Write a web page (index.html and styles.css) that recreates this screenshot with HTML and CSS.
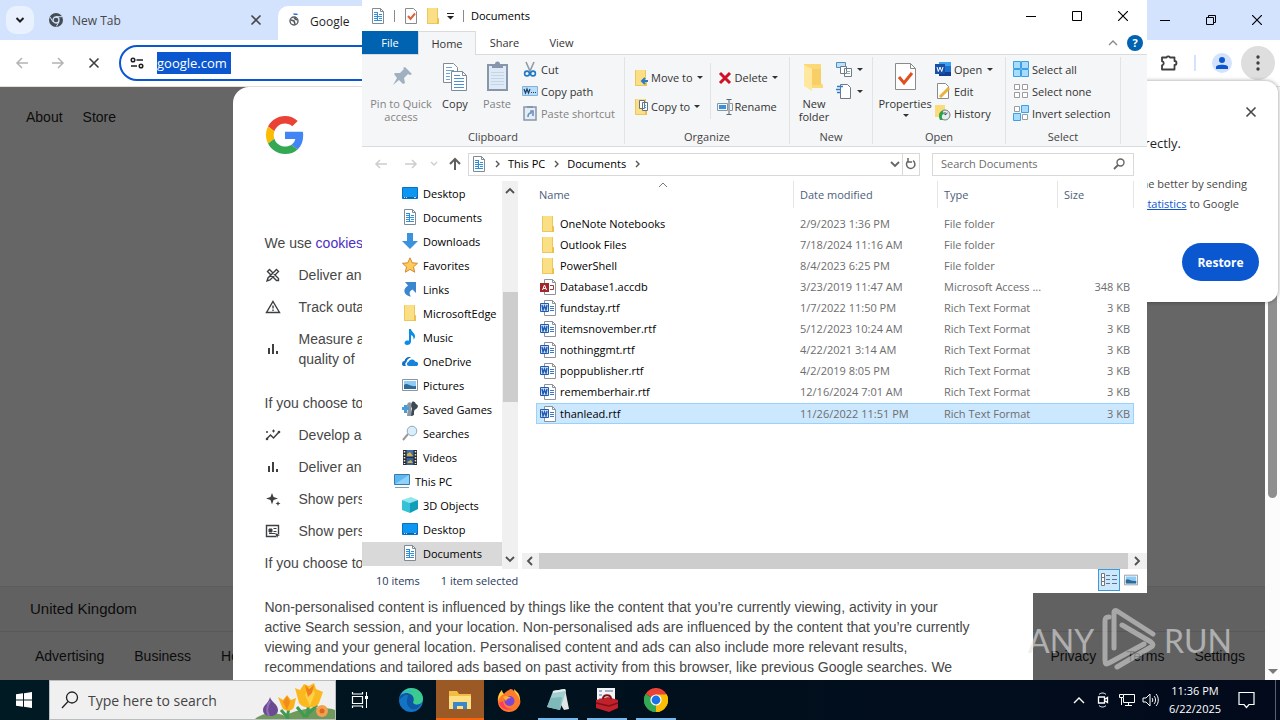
FILE: index.html
```html
<!DOCTYPE html>
<html lang="en">
<head>
  <meta charset="UTF-8" />
  <title>Documents</title>
  <link rel="stylesheet" href="styles.css">
</head>
<body>

  <!-- shared icons -->
  <svg class="sprite" aria-hidden="true">
    <symbol id="i-doc" viewBox="0 0 16 16">
      <path d="M2.500 .5h8l3 3v12h-11z" fill="#fff" stroke="#7f8b94"/>
      <path d="M10.500 .5v3h3" fill="none" stroke="#7f8b94"/>
      <path d="M4 4.500h4M4 6.500h3M9 6.500h3M4 8.500h8M4 10.500h3M9 10.500h3M4 12.500h8" stroke="#2f8fd8"/>
      <path d="M7.500 4v9" stroke="#2f8fd8"/>
    </symbol>
    <symbol id="i-folder" viewBox="0 0 16 16">
      <path d="M2 0h11v10h1v6H2z" fill="#fbdf85"/>
      <path d="M2.500 0v15.500h11V10.500h-1V0" fill="none" stroke="#ecc65f"/>
      <path d="M12 10l2 1v5h-2z" fill="#edc04b"/>
    </symbol>
    <symbol id="i-check" viewBox="0 0 16 16">
      <path d="M2.500 .5h8l3 3v12h-11z" fill="#fff" stroke="#8a8a8a"/>
      <path d="M5 8l2.500 3L12 5.500" fill="none" stroke="#e0603a" stroke-width="2"/>
    </symbol>
    <symbol id="i-word" viewBox="0 0 16 16">
      <path d="M4.500 .5h8l3 3v12h-11z" fill="#fff" stroke="#8c9299"/>
      <path d="M12.500 .5v3h3" fill="none" stroke="#8c9299"/>
      <path d="M10 6.500h4M10 8.500h4M10 10.500h4" stroke="#3b78c9"/>
      <path d="M.5 3.500h8v8h-8z" fill="#cfe0f5" stroke="#1f5bb5"/>
      <path d="M2 5l1 5 1.500-4L6 10l1-5" fill="none" stroke="#1f5bb5" stroke-width="1.400"/>
    </symbol>
    <symbol id="i-access" viewBox="0 0 16 16">
      <path d="M4.500 .5h8l3 3v12h-11z" fill="#fff" stroke="#8c9299"/>
      <path d="M12.500 .5v3h3" fill="none" stroke="#8c9299"/>
      <path d="M10 6.500h3.500v4H10" fill="none" stroke="#a4373a"/>
      <path d="M0 4h9v9H0z" fill="#a4262c"/>
      <path d="M2.500 11l2-5 2 5M3.200 9.500h2.600" fill="none" stroke="#fff"/>
    </symbol>
    <symbol id="i-desktop" viewBox="0 0 16 16">
      <path d="M.5 2.500h15v11H.5z" fill="#0d97f2" stroke="#0b6fc0"/>
      <path d="M1 12.500h14" stroke="#0a63ae"/>
      <path d="M2 12.500h1M4 12.500h1M12 12.500h2" stroke="#bfe2fb"/>
    </symbol>
    <symbol id="i-down" viewBox="0 0 16 16"><path d="M5 0h6v8h5l-8 8-8-8h5z" fill="#3a93dc"/></symbol>
    <symbol id="i-star" viewBox="0 0 16 16"><path d="M8 .8l2.200 5 5.300.5-4 3.600 1.200 5.300L8 12.400l-4.700 2.800 1.200-5.300-4-3.600 5.300-.5z" fill="#fccb5b" stroke="#d58a30"/></symbol>
    <symbol id="i-link" viewBox="0 0 16 16"><path d="M3 1h11v11l-3.500-3.500C7 10 7 13 9 15.500 4 15 1 11 3 7.500 4 6 5 5.500 6 4.500z" fill="#3a86d0"/></symbol>
    <symbol id="i-music" viewBox="0 0 16 16"><path d="M7 0h2c.3 3 4.500 4 4 8-.2 1-1 2-1.500 2.500C12 7.500 10 6.500 9 6v6.500C9 15 7 16 5 16c-3 0-3.500-4 0-4.500.8-.1 1.500 0 2 .2z" fill="#0c8ce9"/></symbol>
    <symbol id="i-cloud" viewBox="0 0 16 16">
      <path d="M0 11c0-2 1-3 2.500-3C3 5 6 3 9 4.500 6 5 5 7 4.500 9 3 9.500 3 12 4 13H2c-1.300 0-2-1-2-2z" fill="#0f6fc5"/>
      <path d="M5 11c0-1.500.8-2 1.500-2 .5-3 5.500-3.500 6.500-.5 4 0 4 4.500 1 4.500H7c-1.300 0-2-1-2-2z" fill="#1683dc"/>
    </symbol>
    <symbol id="i-picture" viewBox="0 0 16 16">
      <path d="M.5 2.500h15v11H.5z" fill="#fff" stroke="#8a959e"/>
      <path d="M2 4h12v8H2z" fill="#8ecbf5"/>
      <path d="M2 8c3-3 5 2 12 1v3H2z" fill="#2d6a98"/>
    </symbol>
    <symbol id="i-games" viewBox="0 0 16 16">
      <path d="M5 4c1-4 5-3 5 0 0 2-1 2-1 3l2 8H5l1-8C5 6 5 5 5 4z" fill="#8b969e"/>
      <path d="M10 1c2-1 3 0 4 2 3 1 2 4 0 5-2 1-2 2-2 6l-3 1 1-7c-1-2-1-5 0-7z" fill="#3c4852"/>
      <path d="M0 6h2V4h3v2h2v3H5v3H2V9H0z" fill="#4a9bd6"/>
    </symbol>
    <symbol id="i-magnify" viewBox="0 0 16 16">
      <path d="M1 15l5-6" stroke="#9a9a9a" stroke-width="2"/>
      <circle cx="10" cy="6" r="4.800" fill="#d9eefb" stroke="#8fa9bd"/>
    </symbol>
    <symbol id="i-video" viewBox="0 0 16 16">
      <path d="M1 1h14v15H1z" fill="#2b2b2b"/>
      <path d="M4.500 1h7v7h-7z" fill="#3f6fb0"/><path d="M4.500 9h7v7h-7z" fill="#345f9c"/>
      <path d="M5 5l3-2 3 4H5zM5 13l4-2 2 3H6z" fill="#d4b13e"/>
      <path d="M2.500 2v13M13.500 2v13" stroke="#e8e8e8" stroke-width="1.500" stroke-dasharray="1.500 1.500"/>
    </symbol>
    <symbol id="i-pc" viewBox="0 0 16 16">
      <path d="M.5 1.500h15v10H.5z" fill="#5cb8f2" stroke="#3c7ba8"/>
      <path d="M1 11L15 2v9z" fill="#8fd3fa"/>
      <path d="M1 14.500h14" stroke="#7aa0b8"/>
    </symbol>
    <symbol id="i-cube" viewBox="0 0 16 16">
      <path d="M0 3l9-3 7 3-8 3z" fill="#8ee6ef"/><path d="M0 3l8 3v10l-8-3z" fill="#35c1d6"/><path d="M16 3L8 6v10l8-4z" fill="#0f9db8"/>
    </symbol>
    <symbol id="i-bars" viewBox="0 0 16 16"><path d="M4 7v6M8 3v10M12 10v3" stroke="#3c4043" stroke-width="2"/></symbol>
    <symbol id="i-x" viewBox="0 0 16 16"><path d="M3.500 3.500l9 9M12.500 3.500l-9 9" stroke="currentColor" stroke-width="1.600"/></symbol>
    <symbol id="i-chrome" viewBox="0 0 24 24">
      <path d="M12 12L1.600 6A12 12 0 0 1 22.400 6z" fill="#ea4335"/>
      <path d="M12 12L22.400 6A12 12 0 0 1 12 24z" fill="#fbbc04"/>
      <path d="M12 12v12A12 12 0 0 1 1.600 6z" fill="#34a853"/>
      <path d="M12 6.500h10.700A12 12 0 0 1 12 24l4.800-9.300z" fill="#fbbc04"/>
      <path d="M1.600 6l5.600 9.200L12 17.500l-.5 6.500A12 12 0 0 1 1.600 6z" fill="#34a853"/>
      <circle cx="12" cy="12" r="5.600" fill="#fff"/><circle cx="12" cy="12" r="4.400" fill="#1a73e8"/>
    </symbol>
  </svg>

  <div class="desktop">
    <div class="browser">
      <div class="tab-strip">
        <button class="tab-search" aria-label="Search tabs"><svg width="10" height="10" viewBox="0 0 10 10"><path d="M1.500 3L5 6.500 8.500 3" fill="none" stroke="#1f1f1f" stroke-width="2"/></svg></button>
        <div class="tab">
          <svg width="14" height="14" viewBox="0 0 14 14"><circle cx="7" cy="7" r="7" fill="#454c54"/><circle cx="7" cy="7" r="3" fill="#454c54" stroke="#d3e3fd" stroke-width="1.300"/><path d="M7 3.700h6M4 8.800L1 4M10 8.800L7.300 13.500" stroke="#d3e3fd"/></svg>
          <span>New Tab</span>
          <button class="tab-close" aria-label="Close tab"><svg width="16" height="16"><use href="#i-x"/></svg></button>
        </div>
        <div class="tab active">
          <svg width="12" height="16" viewBox="0 0 12 16"><path d="M4 .5h4l1 1.500H5z" fill="#2a6fdb"/><circle cx="5" cy="8" r="4" fill="#fff" stroke="#555b61" stroke-width="1.400"/><path d="M2 7l3 1 1 3M5 5l3 2" stroke="#555b61" stroke-width="1.600" fill="none"/></svg>
          <span>Google</span>
        </div>
        <div class="window-buttons">
          <button aria-label="Minimize"><svg width="10" height="10"><path d="M0 5.500h10" stroke="#000"/></svg></button>
          <button aria-label="Restore window"><svg width="10" height="10"><path d="M.5 2.500h7v7h-7zM2.500 2.500v-2h7v7h-2" fill="none" stroke="#000"/></svg></button>
          <button aria-label="Close"><svg width="10" height="10"><path d="M0 0l10 10M10 0L0 10" stroke="#000" stroke-width="1.200"/></svg></button>
        </div>
      </div>

      <div class="toolbar">
        <button class="nav" disabled aria-label="Back"><svg width="14" height="14"><path d="M13 7H2M7 2L2 7l5 5" fill="none" stroke="#b4b4b4" stroke-width="1.500"/></svg></button>
        <button class="nav" disabled aria-label="Forward"><svg width="14" height="14"><path d="M1 7h11M7 2l5 5-5 5" fill="none" stroke="#b4b4b4" stroke-width="1.500"/></svg></button>
        <button class="nav" aria-label="Stop"><svg width="16" height="16"><use href="#i-x"/></svg></button>
        <div class="omnibox">
          <svg width="14" height="12" viewBox="0 0 14 12"><circle cx="3" cy="3" r="1.800" fill="none" stroke="#1f1f1f" stroke-width="1.500"/><path d="M6.500 3H13M1 9h6" stroke="#1f1f1f" stroke-width="1.700"/><circle cx="11" cy="9" r="1.800" fill="none" stroke="#1f1f1f" stroke-width="1.500"/></svg>
          <input class="url" type="text" value="google.com" aria-label="Address" />
        </div>
        <div class="toolbar-right">
          <button aria-label="Extensions"><svg width="18" height="18"><path d="M2 3.500h4.500a2 2 0 0 1 3.500 0h4.500V7a2 2 0 0 1 0 4v4.500H2v-4a2.200 2.200 0 0 0 0-4.300z" fill="none" stroke="#3c4043" stroke-width="1.800" stroke-linejoin="round"/></svg></button>
          <span class="bar"></span>
          <button class="profile" aria-label="Profile"><svg width="14" height="14"><circle cx="7" cy="4" r="3" fill="#0b57d0"/><path d="M1 13V11c0-3 12-3 12 0v2z" fill="#0b57d0"/></svg></button>
          <button class="menu" aria-label="Menu"><svg width="4" height="16"><circle cx="2" cy="2" r="1.700" fill="#3c4043"/><circle cx="2" cy="8" r="1.700" fill="#3c4043"/><circle cx="2" cy="14" r="1.700" fill="#3c4043"/></svg></button>
        </div>
      </div>

      <div class="viewport">
        <div class="page">
          <nav class="page-top"><a href="#">About</a><a href="#">Store</a></nav>
          <footer>
            <div class="country">United Kingdom</div>
            <div class="foot-links">
              <div><a href="#">Advertising</a><a href="#">Business</a><a href="#">How</a></div>
              <div><a href="#">Privacy</a><a href="#">Terms</a><a href="#">Settings</a></div>
            </div>
          </footer>
        </div>
        <div class="shade">
          <div class="consent">
            <svg class="g-logo" width="38" height="38" viewBox="0 0 48 48">
              <path fill="#ea4335" d="M24 9.500c3.540 0 6.710 1.220 9.210 3.600l6.850-6.850C35.900 2.380 30.470 0 24 0 14.620 0 6.510 5.380 2.560 13.220l7.980 6.190C12.430 13.720 17.740 9.500 24 9.500z"/>
              <path fill="#4285f4" d="M46.980 24.550c0-1.570-.15-3.090-.38-4.550H24v9.020h12.940c-.58 2.960-2.260 5.480-4.780 7.180l7.730 6c4.510-4.180 7.090-10.360 7.090-17.650z"/>
              <path fill="#fbbc05" d="M10.530 28.590c-.48-1.450-.76-2.990-.76-4.590s.27-3.140.76-4.590l-7.980-6.190C.92 16.460 0 20.120 0 24c0 3.880.92 7.540 2.560 10.780l7.970-6.190z"/>
              <path fill="#34a853" d="M24 48c6.480 0 11.930-2.130 15.890-5.810l-7.730-6c-2.150 1.450-4.920 2.300-8.160 2.300-6.260 0-11.570-4.220-13.470-9.910l-7.980 6.190C6.510 42.620 14.620 48 24 48z"/>
            </svg>
            <p>We use <a href="#">cookies</a></p>
            <ul>
              <li><svg width="16" height="16"><path d="M2.500 4.500l2-2 9 9v2h-2zM2 14l1-3 8.500-8.500 2 2L5 13z" fill="none" stroke="#3c4043" stroke-width="1.400"/></svg><span>Deliver and</span></li>
              <li><svg width="16" height="16"><path d="M8 2.500L14.500 13.500h-13z" fill="none" stroke="#3c4043" stroke-width="1.400"/><path d="M8 6.500v3M8 10.500v1.500" stroke="#3c4043" stroke-width="1.400"/></svg><span>Track outages</span></li>
              <li><svg width="16" height="16"><use href="#i-bars"/></svg><span>Measure a<br>quality of</span></li>
            </ul>
            <p>If you choose to</p>
            <ul>
              <li><svg width="16" height="16"><path d="M1.500 12l4-4 3 3 5.500-6" fill="none" stroke="#3c4043" stroke-width="1.500"/><path d="M2 4v2M8.500 2.500v3M1 5h2M7 4h3" stroke="#3c4043"/><circle cx="2" cy="12" r="1.300" fill="#3c4043"/><circle cx="14" cy="5" r="1.300" fill="#3c4043"/></svg><span>Develop and</span></li>
              <li><svg width="16" height="16"><use href="#i-bars"/></svg><span>Deliver and</span></li>
              <li><svg width="16" height="16"><path d="M7 2l1.500 4L13 7.500 8.500 9 7 13.500 5.500 9 1 7.500 5.500 6zM13 10l.7 1.800 1.800.7-1.800.7L13 15l-.7-1.800-1.800-.7 1.800-.7z" fill="#3c4043"/></svg><span>Show personal</span></li>
              <li><svg width="16" height="16"><path d="M11 13.500H1.500v-11h12V11" fill="none" stroke="#3c4043" stroke-width="1.400"/><path d="M4 6h3v3H4zM8.500 5.500h3M8.500 8.500h3M4 10.500h6" fill="#3c4043" stroke="#3c4043"/><path d="M10 10l5 2-2 1-1 2z" fill="#3c4043"/></svg><span>Show personal</span></li>
            </ul>
            <p class="last">If you choose to</p>
            <p class="long">Non-personalised content is influenced by things like the content that you’re currently viewing, activity in your active Search session, and your location. Non-personalised ads are influenced by the content that you’re currently viewing and your general location. Personalised content and ads can also include more relevant results, recommendations and tailored ads based on past activity from this browser, like previous Google searches. We</p>
          </div>
        </div>
        <div class="page-scroll"><span class="thumb"></span><span class="caret"></span></div>
        <div class="watermark">
          <span>ANY</span>
          <svg width="58" height="64" viewBox="0 0 58 64">
            <g fill="none" stroke="#d8d8d8" stroke-width="5" stroke-linejoin="round" stroke-linecap="round">
              <path d="M9 9c-4 0-4 2-4 5v38c0 4 1 5 4 3l35-19"/>
              <path d="M14 40V4c0-1 1-2 3-1l36 23"/>
              <path d="M22 17l29 17c3 2 2 4 0 5L17 59"/>
            </g>
          </svg>
          <span>RUN</span>
        </div>
      </div>

      <div class="restore-bubble">
        <button class="bubble-close" aria-label="Dismiss"><svg width="16" height="16"><use href="#i-x"/></svg></button>
        <h1>correctly.</h1>
        <p>Chrome better by sending</p>
        <p class="stats"><a href="#">statistics</a> to Google</p>
        <button class="restore-btn">Restore</button>
      </div>
    </div>

    <div class="explorer">
      <div class="title-bar">
        <svg width="16" height="16"><use href="#i-doc"/></svg>
        <span class="divider"></span>
        <svg width="16" height="16"><use href="#i-check"/></svg>
        <svg width="16" height="16"><use href="#i-folder"/></svg>
        <svg width="8" height="8"><path d="M0 1.500h7" stroke="#222"/><path d="M0 4h7L3.500 7.500z" fill="#222"/></svg>
        <span class="divider"></span>
        <span>Documents</span>
        <div class="window-buttons">
          <button aria-label="Minimize"><svg width="10" height="10"><path d="M0 5.500h10" stroke="#000"/></svg></button>
          <button aria-label="Maximize"><svg width="10" height="10"><path d="M.5 .5h9v9h-9z" fill="none" stroke="#000"/></svg></button>
          <button aria-label="Close"><svg width="10" height="10"><path d="M0 0l10 10M10 0L0 10" stroke="#000" stroke-width="1.200"/></svg></button>
        </div>
      </div>

      <div class="ribbon-tabs">
        <button class="file">File</button>
        <button class="current">Home</button>
        <button>Share</button>
        <button>View</button>
        <div class="ribbon-help">
          <svg width="10" height="6"><path d="M1 5l4-4 4 4" fill="none" stroke="#8a8a8a" stroke-width="1.400"/></svg>
          <button aria-label="Help">?</button>
        </div>
      </div>

      <div class="ribbon">
        <section class="clipboard">
          <div class="tools">
            <button class="big pin off"><svg width="32" height="32"><path d="M20 6l7 7-2 1-2-1-4 4 1 5-2 1-4-4-6 5 4-7-3-4 1-1 5 0 4-4-1-1z" fill="#9fb0c1"/></svg>Pin to Quick access</button>
            <button class="big copy"><svg width="32" height="32"><path d="M4.500 2.500h10l4 4v15h-14z" fill="#fff" stroke="#7d8b98"/><path d="M7 6.500h6M7 9.500h8M7 12.500h4M7 15.500h4M7 18.500h4" stroke="#6ba4dd"/><path d="M12.500 10.500h11l4 4v15h-15z" fill="#fff" stroke="#7d8b98"/><path d="M23.500 10.500v4h4" fill="none" stroke="#7d8b98"/><path d="M15 14.500h6M15 17.500h10M15 20.500h10M15 23.500h10M15 26.500h10" stroke="#4a90d9"/></svg>Copy</button>
            <button class="big copy off"><svg width="32" height="32"><path d="M7 4h19v25H7z" fill="#dfeaf6" stroke="#8796ab" stroke-width="2"/><path d="M11 3h3a2.500 2.500 0 0 1 5 0h3v4H11z" fill="#8796ab"/><path d="M10 11.500h13M10 14.500h13M10 17.500h13M10 20.500h13M10 23.500h13" stroke="#c3d5e8"/></svg>Paste</button>
            <div class="small">
              <button><svg width="16" height="16"><path d="M4 1l4 9M12 1L8 10" stroke="#8e9aa6" stroke-width="1.600"/><circle cx="5" cy="12.500" r="2.400" fill="none" stroke="#2178c4" stroke-width="1.600"/><circle cx="11" cy="12.500" r="2.400" fill="none" stroke="#2178c4" stroke-width="1.600"/></svg>Cut</button>
              <button><svg width="16" height="16"><path d="M.5 3.500h15v9H.5z" fill="#b9ddf7" stroke="#7fb3da"/><path d="M2 6l1.500 4L5 6l1.500 4L8 6M9 9.500h1M11 9.500h1M13 9.500h1" fill="none" stroke="#1c3f66" stroke-width="1.200"/></svg>Copy path</button>
              <button class="off"><svg width="16" height="16"><path d="M2 2h12v13H2z" fill="#e4edf6" stroke="#8796ab" stroke-width="1.500"/><path d="M5 1h6v2H5z" fill="#8796ab"/><path d="M6 12c0-3 1-4 3-4V6h2v5" fill="none" stroke="#6d8fbb" stroke-width="1.600"/></svg>Paste shortcut</button>
            </div>
          </div>
          <h2>Clipboard</h2>
        </section>
        <section class="organize">
          <div class="tools">
            <div class="small tall">
              <button><svg width="16" height="16"><use href="#i-folder"/><path d="M15 11H10M12 8L9 11l3 3" fill="none" stroke="#2a7cc7" stroke-width="2"/></svg>Move to <i class="arrow"></i></button>
              <button><svg width="16" height="16"><use href="#i-folder"/><path d="M6.500 1.500h5v8h-5zM9.500 3.500h5v8h-5z" fill="#fff" stroke="#5f7486"/><path d="M11 6.500h2M11 8.500h2" stroke="#4a90d9"/></svg>Copy to <i class="arrow"></i></button>
            </div>
            <span class="rule"></span>
            <div class="small tall">
              <button><svg width="16" height="16"><path d="M3 3l10 10M13 3L3 13" stroke="#cf1126" stroke-width="3"/></svg>Delete <i class="arrow"></i></button>
              <button><svg width="16" height="16"><path d="M.5 4.500h10v7H.5zM13 4.500h2.500v7H13" fill="none" stroke="#8597a6"/><path d="M2 6h7v4H2z" fill="#3d8fd6"/><path d="M9.500 .5h5M9.500 15.500h5M12 1v14" stroke="#566573"/></svg>Rename</button>
            </div>
          </div>
          <h2>Organize</h2>
        </section>
        <section class="new">
          <div class="tools">
            <button class="big folder"><svg width="32" height="32"><path d="M6 3h17v19l2 2v3H12l-6-3z" fill="#fbd978"/><path d="M6 4l8 4v22l-8-5z" fill="#ffe79d"/><path d="M14 8h9v16h-9z" fill="#f7cf66"/></svg>New folder</button>
            <div class="small">
              <button aria-label="New item"><svg width="16" height="16"><path d="M.5 1.500h9v5h-9z" fill="#bfe0f8" stroke="#4f8dbd"/><path d="M4.500 5.500h6v7h-6zM8.500 7.500h7v8h-7z" fill="#fff" stroke="#6e7b86"/><path d="M10 10.500h4M10 12.500h4" stroke="#8aa"/></svg><i class="arrow"></i></button>
              <button aria-label="Easy access"><svg width="16" height="16"><path d="M4.500 1.500h7l3 3v11h-10z" fill="#fff" stroke="#6e7b86"/><path d="M1 3.500h6M0 6.500h5M1 9.500h3" stroke="#2a7cc7" stroke-width="1.400"/></svg><i class="arrow"></i></button>
            </div>
          </div>
          <h2>New</h2>
        </section>
        <section class="open">
          <div class="tools">
            <button class="big props"><svg width="32" height="32"><path d="M6.500 2.500h15l5 5v21h-20z" fill="#fff" stroke="#8a8a8a"/><path d="M21.500 2.500v5h5" fill="none" stroke="#8a8a8a"/><path d="M10 16l5 6 8-10" fill="none" stroke="#e0501f" stroke-width="3"/></svg>Properties<i class="arrow"></i></button>
            <div class="small">
              <button><svg width="16" height="16"><path d="M4 1h12v14H4z" fill="#1f6fd0"/><path d="M4 1h12v4H4z" fill="#3fa0ee"/><path d="M4 11h12v4H4z" fill="#123f8c"/><path d="M0 3h10v10H0z" fill="#1850a8"/><path d="M2 6l1.300 4.500L5 6l1.700 4.500L8 6" fill="none" stroke="#fff"/></svg>Open <i class="arrow"></i></button>
              <button><svg width="16" height="16"><path d="M2.500 .5h8l3 3v12h-11z" fill="#fff" stroke="#8a8a8a"/><path d="M5 14l9-9" stroke="#e8b33c" stroke-width="3"/></svg>Edit</button>
              <button><svg width="16" height="16"><path d="M0 0h10v12H0z" fill="#fbdc7b"/><circle cx="10" cy="10" r="5" fill="#e7eef0" stroke="#6e8378"/><path d="M10 7v3l2.500-2" fill="none" stroke="#445"/><path d="M8 6C4 6 3 11 5 15h3c-2-3-1-6 1-6z" fill="#2fa14b"/></svg>History</button>
            </div>
          </div>
          <h2>Open</h2>
        </section>
        <section class="select">
          <div class="tools">
            <div class="small">
              <button><svg width="16" height="16"><path d="M.5 .5h7v7h-7zM8.500 .5h7v7h-7zM.5 8.500h7v7h-7zM8.500 8.500h7v7h-7z" fill="#a8dcfa" stroke="#3aa0e8"/></svg>Select all</button>
              <button><svg width="16" height="16"><path d="M1.500 1.500h5v5h-5zM9.500 1.500h5v5h-5zM1.500 9.500h5v5h-5zM9.500 9.500h5v5h-5z" fill="#fff" stroke="#9b9b9b"/></svg>Select none</button>
              <button><svg width="16" height="16"><path d="M1.500 1.500h5v5h-5zM9.500 9.500h5v5h-5z" fill="#fff" stroke="#9b9b9b"/><path d="M8.500 .5h7v7h-7zM.5 8.500h7v7h-7z" fill="#a8dcfa" stroke="#3aa0e8"/></svg>Invert selection</button>
            </div>
          </div>
          <h2>Select</h2>
        </section>
      </div>

      <div class="address-row">
        <button disabled aria-label="Back"><svg width="14" height="14"><path d="M13 7H2M6 3L2 7l4 4" fill="none" stroke="#ccc" stroke-width="1.500"/></svg></button>
        <button disabled aria-label="Forward"><svg width="14" height="14"><path d="M1 7h11M8 3l4 4-4 4" fill="none" stroke="#ccc" stroke-width="1.500"/></svg></button>
        <button class="thin" disabled aria-label="Recent"><svg width="8" height="6"><path d="M1 1l3 3 3-3" fill="none" stroke="#ccc" stroke-width="1.300"/></svg></button>
        <button class="up" aria-label="Up"><svg width="12" height="14"><path d="M6 13V2M1 7l5-5 5 5" fill="none" stroke="#5f5f5f" stroke-width="2"/></svg></button>
        <div class="path">
          <svg width="16" height="16"><use href="#i-doc"/></svg>
          <svg class="sep" width="6" height="8"><path d="M1 1l3 3-3 3" fill="none" stroke="#555" stroke-width="1.400"/></svg>
          <a href="#">This PC</a>
          <svg class="sep" width="6" height="8"><path d="M1 1l3 3-3 3" fill="none" stroke="#555" stroke-width="1.400"/></svg>
          <a href="#">Documents</a>
          <svg class="sep" width="6" height="8"><path d="M1 1l3 3-3 3" fill="none" stroke="#555" stroke-width="1.400"/></svg>
          <button class="drop" aria-label="Previous locations"><svg width="10" height="7"><path d="M1 1l4 4 4-4" fill="none" stroke="#666" stroke-width="1.800"/></svg></button>
          <button class="refresh" aria-label="Refresh"><svg width="12" height="12"><path d="M3 3a4.200 4.200 0 1 0 5-.3M3 0v4h4" fill="none" stroke="#666" stroke-width="1.500"/></svg></button>
        </div>
        <div class="search">
          <input type="text" placeholder="Search Documents" aria-label="Search Documents" />
          <svg width="12" height="12"><circle cx="7.500" cy="4.500" r="3.500" fill="none" stroke="#666" stroke-width="1.400"/><path d="M5 7l-4 4" stroke="#666" stroke-width="1.800"/></svg>
        </div>
      </div>

      <div class="content">
        <nav class="tree">
          <a href="#"><svg width="16" height="16"><use href="#i-desktop"/></svg>Desktop</a>
          <a href="#"><svg width="16" height="16"><use href="#i-doc"/></svg>Documents</a>
          <a href="#"><svg width="16" height="16"><use href="#i-down"/></svg>Downloads</a>
          <a href="#"><svg width="16" height="16"><use href="#i-star"/></svg>Favorites</a>
          <a href="#"><svg width="16" height="16"><use href="#i-link"/></svg>Links</a>
          <a href="#"><svg width="16" height="16"><use href="#i-folder"/></svg>MicrosoftEdge</a>
          <a href="#"><svg width="16" height="16"><use href="#i-music"/></svg>Music</a>
          <a href="#"><svg width="16" height="16"><use href="#i-cloud"/></svg>OneDrive</a>
          <a href="#"><svg width="16" height="16"><use href="#i-picture"/></svg>Pictures</a>
          <a href="#"><svg width="16" height="16"><use href="#i-games"/></svg>Saved Games</a>
          <a href="#"><svg width="16" height="16"><use href="#i-magnify"/></svg>Searches</a>
          <a href="#"><svg width="16" height="16"><use href="#i-video"/></svg>Videos</a>
          <a class="root" href="#"><svg width="16" height="16"><use href="#i-pc"/></svg>This PC</a>
          <a href="#"><svg width="16" height="16"><use href="#i-cube"/></svg>3D Objects</a>
          <a href="#"><svg width="16" height="16"><use href="#i-desktop"/></svg>Desktop</a>
          <a class="selected" href="#"><svg width="16" height="16"><use href="#i-doc"/></svg>Documents</a>
        </nav>
        <div class="v-scroll">
          <svg width="10" height="7"><path d="M1 6l4-4 4 4" fill="none" stroke="#505050" stroke-width="1.800"/></svg>
          <span class="thumb"></span>
          <svg width="10" height="7"><path d="M1 1l4 4 4-4" fill="none" stroke="#505050" stroke-width="1.800"/></svg>
        </div>
        <div class="files">
          <table>
            <thead>
              <tr><th class="name">Name<svg class="sort" width="10" height="6"><path d="M1 5l4-4 4 4" fill="none" stroke="#777"/></svg></th><th class="date">Date modified</th><th class="type">Type</th><th>Size</th></tr>
            </thead>
            <tbody>
              <tr><td><svg width="16" height="16"><use href="#i-folder"/></svg>OneNote Notebooks</td><td>2/9/2023 1:36 PM</td><td>File folder</td><td></td></tr>
              <tr><td><svg width="16" height="16"><use href="#i-folder"/></svg>Outlook Files</td><td>7/18/2024 11:16 AM</td><td>File folder</td><td></td></tr>
              <tr><td><svg width="16" height="16"><use href="#i-folder"/></svg>PowerShell</td><td>8/4/2023 6:25 PM</td><td>File folder</td><td></td></tr>
              <tr><td><svg width="16" height="16"><use href="#i-access"/></svg>Database1.accdb</td><td>3/23/2019 11:47 AM</td><td>Microsoft Access ...</td><td>348 KB</td></tr>
              <tr><td><svg width="16" height="16"><use href="#i-word"/></svg>fundstay.rtf</td><td>1/7/2022 11:50 PM</td><td>Rich Text Format</td><td>3 KB</td></tr>
              <tr><td><svg width="16" height="16"><use href="#i-word"/></svg>itemsnovember.rtf</td><td>5/12/2023 10:24 AM</td><td>Rich Text Format</td><td>3 KB</td></tr>
              <tr><td><svg width="16" height="16"><use href="#i-word"/></svg>nothinggmt.rtf</td><td>4/22/2021 3:14 AM</td><td>Rich Text Format</td><td>3 KB</td></tr>
              <tr><td><svg width="16" height="16"><use href="#i-word"/></svg>poppublisher.rtf</td><td>4/2/2019 8:05 PM</td><td>Rich Text Format</td><td>3 KB</td></tr>
              <tr><td><svg width="16" height="16"><use href="#i-word"/></svg>rememberhair.rtf</td><td>12/16/2024 7:01 AM</td><td>Rich Text Format</td><td>3 KB</td></tr>
              <tr class="selected"><td><svg width="16" height="16"><use href="#i-word"/></svg>thanlead.rtf</td><td>11/26/2022 11:51 PM</td><td>Rich Text Format</td><td>3 KB</td></tr>
            </tbody>
          </table>
          <div class="h-scroll">
            <svg width="7" height="10"><path d="M6 1L2 5l4 4" fill="none" stroke="#505050" stroke-width="1.800"/></svg>
            <span class="thumb"></span>
            <svg width="7" height="10"><path d="M1 1l4 4-4 4" fill="none" stroke="#505050" stroke-width="1.800"/></svg>
          </div>
        </div>
      </div>

      <div class="status-bar">
        <span>10 items</span>
        <span>1 item selected</span>
        <div class="views">
          <button class="on" aria-label="Details"><svg width="16" height="14"><path d="M.5 .5h3v12h-3zM.5 4.500h3M.5 8.500h3" fill="#fff" stroke="#777"/><path d="M5 2.500h4M11 2.500h5M5 6.500h4M11 6.500h5M5 10.500h4M11 10.500h5" stroke="#5b7486"/></svg></button>
          <button aria-label="Large icons"><svg width="14" height="14" viewBox="0 0 16 16"><use href="#i-picture"/></svg></button>
        </div>
      </div>
    </div>
  </div>

  <div class="taskbar">
    <button class="start" aria-label="Start"><svg width="16" height="16"><path d="M0 2.300L7 1.300V7.500H0zM8 1.200L16 0v7.500H8zM0 8.500h7v6.200l-7-1zM8 8.500h8V16l-8-1.200z" fill="#fff"/></svg></button>
    <div class="task-search">
      <svg width="18" height="18"><circle cx="11" cy="6.500" r="5.500" fill="none" stroke="#222" stroke-width="1.300"/><path d="M7 10.500L1 17" stroke="#222" stroke-width="1.300"/></svg>
      <input type="text" placeholder="Type here to search" aria-label="Type here to search" />
      <svg class="flowers" width="80" height="38" viewBox="0 0 80 38">
        <path d="M0 38c8-7 22-7 30-3 12-8 40-10 50-6v9z" fill="#6f9a5b"/>
        <path d="M32 38l2-12M34 38l-8-9M52 36l2-16M50 36l12-12M50 36L42 26" stroke="#3f9b52" stroke-width="3"/>
        <path d="M15 16c1 5 8 7 8 13 0 8-15 8-15 0 0-5 6-7 7-13z" fill="#6c4a93"/><path d="M15 20c-3 5-4 10-1 15" fill="none" stroke="#8f70b3" stroke-width="2"/>
        <path d="M23 16l5 3 4-5 4 5 5-2-2 9c-2 5-10 5-12 0z" fill="#f9b21d"/><path d="M32 15l3 6-3 8-4-8z" fill="#f28a1c"/>
        <path d="M40 7l5 2 4-6 5 2 5-3 2 6 7 3-4 11c-3 6-16 6-20 0z" fill="#fbb91f"/><path d="M55 5l5 7-5 13-5-11z" fill="#fdd24a"/><path d="M50 4l4 4 5-4-2 8-4 4z" fill="#f0801b"/>
        <circle cx="67" cy="30" r="6" fill="#f3a052"/><circle cx="67" cy="30" r="2.500" fill="#d9691d"/>
      </svg>
    </div>
    <button class="task-view" aria-label="Task View"><svg width="18" height="16"><path d="M1.500 4.500h10v7h-10zM1.500 0v2h10V0M1.500 16v-2h10v2" fill="none" stroke="#fff" stroke-width="1.200"/><path d="M15.500 0v16" stroke="#fff"/><path d="M14 4h3v3h-3z" fill="#fff"/></svg></button>
    <button aria-label="Microsoft Edge"><svg width="24" height="24"><circle cx="12" cy="12" r="12" fill="#1474c4"/><path d="M1 9C3 3 8 0 12 0c7 0 12 5 12 10.500 0 4-3 6-6.500 6-2.500 0-4-1-3.500-2.500C15 11 13 7 9 7c-3 0-6 1-8 2z" fill="#3ccb8f"/><path d="M1 9C4 2 12 1 16 5c-4-2-12-1-15 4z" fill="#2bb5dd"/><path d="M9 7c-4 0-7 3-9 5 0-2 .5-3 1-4 3-3 6-3.500 9-2.500 4 1 6 5 4 9 1 3 5 3 8 1-2 5-6 6-8 6-4-1-7-5-6-10z" fill="#0d57a6"/></svg></button>
    <button class="current" aria-label="File Explorer"><svg width="22" height="18"><path d="M0 0h8l2 3h12v15H0z" fill="#f3bd43"/><path d="M0 5h22v13H0z" fill="#ffdf83"/><path d="M4 11h14v7h-4v-3H8v3H4z" fill="#3b87c8"/></svg></button>
    <button aria-label="Firefox"><svg width="24" height="24"><path d="M12 2c2-2 3-1 5 1 1-1 2 1 3 3 3 3 4 7 3 10-2 5-6 8-11 8S1 20 1 14C0 9 2 5 5 2c0 3 1 3 2 4 1-2 3-3 5-4z" fill="#ff7a2a"/><path d="M17 1c0 4 5 6 6 12 0-5-1-7-3-9-1-1-2-2-3-3zM5 2C2 5 1 9 1 13c2-5 4-6 6-7-1-1-2-2-2-4z" fill="#ffcf3f"/><path d="M2 15c2 6 8 8 14 6-6 0-9-2-10-8z" fill="#ff3c5f"/><circle cx="12.500" cy="13" r="5" fill="#7b45d8"/><path d="M6 9c3-2 5-1 8 1-3 0-4 1-5 3z" fill="#ffb22e"/></svg></button>
    <button class="running" aria-label="Notepad"><svg width="24" height="24"><path d="M7 3l12-2 4 20-5 1z" fill="#dfe5e5"/><path d="M7 3l12-2 1 2-6 19L1 19z" fill="#9fcfcf"/><path d="M7 3l12-2 .5 2L7 5z" fill="#e7eeee"/><path d="M5 10l11-1-2 13L1 19z" fill="#7fb8ba"/></svg></button>
    <button class="running" aria-label="Tools"><svg width="24" height="24"><path d="M2 0h18v16H2z" fill="#f4f4f4"/><path d="M4 3h3M4 7h3M4 11h3M10 3h8" stroke="#4f6fae"/><path d="M1 12l12-3 10 3v8l-9 4-13-4z" fill="#c2202b"/><path d="M8 11c0-5 8-5 8 0" fill="none" stroke="#7c1219" stroke-width="2"/><path d="M1 15l13 3 9-3" fill="none" stroke="#7c1219" stroke-width="1.500"/></svg></button>
    <button class="running" aria-label="Google Chrome"><svg width="24" height="24"><use href="#i-chrome"/></svg></button>

    <div class="tray">
      <button aria-label="Show hidden icons"><svg width="12" height="8"><path d="M1 7l5-5 5 5" fill="none" stroke="#fff" stroke-width="1.400"/></svg></button>
      <button aria-label="Meet now"><svg width="14" height="16"><path d="M2.500 5h6v6h-6zM8.500 7.500l3-2v5l-3-2" fill="none" stroke="#fff" stroke-width="1.300"/><path d="M3 2.500c2-2 5-2 7 0M3 13.500c2 2 5 2 7 0" fill="none" stroke="#fff"/></svg></button>
      <button aria-label="Network"><svg width="18" height="16"><path d="M5.500 2.500h11v8h-11V6M10.500 10.500v3M7 13.500h7" fill="none" stroke="#fff"/><path d="M1.500 2.500h4v3h-4zM3.500 6v7" fill="none" stroke="#fff"/></svg></button>
      <button aria-label="Volume"><svg width="18" height="14"><path d="M1 5h3l4-4v12L4 9H1z" fill="none" stroke="#fff"/><path d="M10 5c1 1 1 3 0 4M12 3c2 2 2 6 0 8M14 1c3 3 3 9 0 12" fill="none" stroke="#fff"/></svg></button>
      <div class="clock"><span>11:36 PM</span><span>6/22/2025</span></div>
      <button class="notify" aria-label="Notifications"><svg width="18" height="18"><path d="M1 1.500h15v12h-5l-2.500 3-2.500-3H1z" fill="none" stroke="#fff" stroke-width="1.200"/></svg></button>
    </div>
  </div>

</body>
</html>
```
FILE: styles.css
```css
* {
  box-sizing: border-box;
}

body {
  margin: 0;
  height: 100vh;
  display: flex;
  flex-direction: column;
  overflow: hidden;
  font-family: "Open Sans", "Noto Sans", sans-serif;
  font-size: 11px;
  color: #000;
}

button {
  border: none;
  background: none;
  padding: 0;
  margin: 0;
  font: inherit;
  color: inherit;
  display: flex;
  align-items: center;
  justify-content: center;
}

input {
  border: none;
  outline: none;
  padding: 0;
  background: none;
  font: inherit;
}

a {
  color: inherit;
  text-decoration: none;
}

svg {
  flex: none;
}

.sprite {
  position: absolute;
  width: 0;
  height: 0;
}

.desktop {
  flex: 1;
  position: relative;
  min-height: 0;
}

/* browser */
.browser {
  height: 100%;
  display: flex;
  flex-direction: column;
  background: #fff;
}

.tab-strip {
  height: 40px;
  display: flex;
  align-items: center;
  background: #d3e3fd;
  font-size: 12px;
  color: #1f1f1f;
}

.tab-search {
  width: 28px;
  height: 28px;
  margin: 0 15px 0 6px;
  border-radius: 10px;
  background: #e9f1fe;
}

.tab {
  display: flex;
  align-items: center;
  gap: 9px;
  width: 229px;
  color: #474747;
}

.tab.active {
  align-self: flex-end;
  height: 34px;
  width: 240px;
  padding: 0 0 4px 11px;
  border-radius: 10px 10px 0 0;
  background: #fff;
  color: #1f1f1f;
}

.tab-close {
  margin-left: auto;
  margin-right: 14px;
}

.window-buttons {
  display: flex;
  align-self: stretch;
  margin-left: auto;
}

.window-buttons button {
  width: 46px;
}

.toolbar {
  height: 47px;
  display: flex;
  align-items: center;
  padding-left: 4px;
  border-bottom: 1px solid #e8ddd5;
  background: #fff;
}

.nav {
  width: 36px;
  color: #3c4043;
}

.omnibox {
  display: flex;
  align-items: center;
  gap: 13px;
  flex: 1;
  height: 36px;
  margin-left: 7px;
  padding-left: 9px;
  border: 2px solid #0b57d0;
  border-radius: 18px;
}

.url {
  width: 74px;
  height: 22px;
  background: #0b57d0;
  color: #fff;
  font-size: 13px;
}

.toolbar-right {
  display: flex;
  align-items: center;
  padding: 0 5px 0 33px;
}

.toolbar-right .bar {
  width: 2px;
  height: 16px;
  margin: 0 16px;
  background: #d3e3fd;
}

.profile {
  width: 20px;
  height: 20px;
  margin-right: 9px;
  border-radius: 50%;
  background: #d3e3fd;
}

.menu {
  width: 34px;
  height: 34px;
  border-radius: 50%;
  background: #dedede;
}

.viewport {
  flex: 1;
  display: flex;
  position: relative;
  min-height: 0;
  font-family: "Liberation Sans", Arial, sans-serif;
  font-size: 14px;
}

.page {
  flex: 1;
  display: flex;
  flex-direction: column;
  justify-content: space-between;
  color: #1f1f1f;
}

.page-top {
  display: flex;
  gap: 20px;
  padding: 22px 26px;
}

footer {
  background: #f2f2f2;
}

.country {
  padding: 0 30px;
  height: 46px;
  line-height: 44px;
  font-size: 15px;
  border-top: 1px solid #e6e6e6;
  border-bottom: 1px solid #dadce0;
}

.foot-links {
  display: flex;
  justify-content: space-between;
  padding: 0 20px 0 35px;
  line-height: 48px;
}

.foot-links div {
  display: flex;
  gap: 30px;
}

.shade {
  position: absolute;
  inset: 0 15px 0 0;
  overflow: hidden;
  background: rgba(0, 0, 0, 0.6);
}

.consent {
  width: 800px;
  height: 700px;
  margin: 0 auto;
  padding: 29px 32px;
  border-radius: 16px;
  background: #fff;
  color: #474747;
  line-height: 20px;
}

.consent p {
  margin: 0;
}

.consent p a {
  color: #4a2fc4;
}

.consent .last {
  margin: -12px 0 24px;
}

.consent .long {
  padding-right: 28px;
}

.g-logo {
  display: block;
  margin: 0 1px 79px;
}

.consent ul {
  list-style: none;
  margin: 12px 0 24px;
  padding: 0;
}

.consent li {
  display: flex;
  align-items: center;
  gap: 18px;
  margin-bottom: 12px;
}

.page-scroll {
  width: 15px;
  display: flex;
  flex-direction: column;
  align-items: center;
  justify-content: space-between;
  padding-bottom: 6px;
  background: #fcfcfc;
}

.page-scroll .thumb {
  width: 9px;
  height: 411px;
  border-radius: 5px;
  background: #8f8f8f;
}

.page-scroll .caret {
  border: 5px solid transparent;
  border-top-color: #7a7a7a;
  border-bottom: none;
}

.watermark {
  position: absolute;
  right: 48px;
  bottom: 8px;
  display: flex;
  align-items: center;
  gap: 6px;
  opacity: 0.6;
  color: #e4e4e4;
  font-family: Lato, "Liberation Sans", sans-serif;
  font-size: 32px;
}

.restore-bubble {
  position: absolute;
  top: 81px;
  right: 2px;
  width: 340px;
  height: 221px;
  padding: 54px 19px 20px;
  border-radius: 12px;
  background: #fff;
  box-shadow: 0 0 4px rgba(0, 0, 0, 0.4);
  color: #474747;
  text-align: right;
}

.restore-bubble h1 {
  margin: 0 78px 23px;
  font-size: 13px;
  font-weight: normal;
  line-height: 16px;
  color: #1f1f1f;
}

.restore-bubble p {
  margin: 0;
  padding-right: 12px;
  line-height: 20px;
}

.restore-bubble .stats {
  padding-right: 20px;
}

.restore-bubble a {
  color: #0b57d0;
  text-decoration: underline;
}

.bubble-close {
  position: absolute;
  top: 23px;
  right: 19px;
}

.restore-btn {
  width: 77px;
  height: 38px;
  margin: 29px 0 0 auto;
  border-radius: 19px;
  background: #0b57d0;
  color: #fff;
  font-size: 12px;
  font-weight: bold;
}

/* explorer window */
.explorer {
  position: absolute;
  top: 0;
  left: 362px;
  width: 785px;
  background: #fff;
}

.title-bar {
  display: flex;
  align-items: center;
  gap: 6px;
  height: 31px;
  padding: 0 1px 0 8px;
}

.title-bar .divider {
  width: 1px;
  height: 12px;
  margin: 0 2px;
  background: #8a8a8a;
}

.title-bar .divider + span {
  margin-left: -1px;
}

.ribbon-tabs {
  display: flex;
  height: 24px;
  border-bottom: 1px solid #dadbdc;
  color: #333;
}

.ribbon-tabs > button {
  width: 57px;
}

.ribbon-tabs > .file {
  width: 56px;
  background: #0063b1;
  color: #fff;
}

.ribbon-tabs > .current {
  width: 58px;
  height: 24px;
  border: 1px solid #dadbdc;
  border-bottom: none;
  background: #f5f6f7;
}

.ribbon-help {
  display: flex;
  align-items: center;
  gap: 9px;
  margin-left: auto;
  padding-right: 4px;
}

.ribbon-help button {
  width: 16px;
  height: 16px;
  border-radius: 50%;
  background: #0063b1;
  color: #fff;
  font-weight: bold;
}

.ribbon {
  display: flex;
  height: 92px;
  padding: 2px 0;
  border-bottom: 1px solid #dadbdc;
  background: #f5f6f7;
  color: #333;
}

.ribbon section {
  display: flex;
  flex-direction: column;
  justify-content: space-between;
  padding-top: 1px;
  border-right: 1px solid #e2e3e4;
}

.clipboard {
  width: 263px;
}

.organize {
  width: 165px;
}

.new {
  width: 83px;
}

.open {
  width: 133px;
}

.select {
  width: 115px;
}

.ribbon h2 {
  margin: 0;
  font-size: 11px;
  font-weight: normal;
  line-height: 14px;
  text-align: center;
  color: #444;
}

.tools {
  display: flex;
  padding: 0 6px;
}

.big {
  flex-direction: column;
  justify-content: flex-start;
  gap: 4px;
  padding-top: 3px;
  line-height: 13px;
}

.pin {
  width: 66px;
}

.copy {
  width: 42px;
}

.folder {
  width: 36px;
}

.props {
  width: 52px;
}

.off {
  color: #838383;
}

.small {
  display: flex;
  flex-direction: column;
  align-items: flex-start;
  margin-left: 4px;
  white-space: nowrap;
}

.small button {
  height: 22px;
  gap: 3px;
}

.tall {
  padding-top: 5px;
}

.tall button {
  height: 29px;
  gap: 2px;
}

.organize .tools {
  padding-left: 4px;
}

.select .small {
  margin-left: 1px;
}

.arrow {
  margin-left: 2px;
  border: 3px solid transparent;
  border-top-color: #333;
  border-bottom: none;
}

.rule {
  width: 1px;
  height: 56px;
  margin: 5px 2px 0 7px;
  background: #e2e3e4;
}

.address-row {
  display: flex;
  align-items: center;
  height: 34px;
  padding: 0 13px 0 4px;
}

.address-row > button {
  width: 30px;
}

.address-row > .thin {
  width: 16px;
}

.address-row > .up {
  width: 26px;
}

.path {
  display: flex;
  align-items: center;
  width: 452px;
  height: 23px;
  padding-left: 2px;
  border: 1px solid #d9d9d9;
}

.path a,
.search input {
  padding-bottom: 2px;
}

.path .sep {
  margin: 0 7px 0 8px;
}

.path .sep + a {
  margin-right: 1px;
}

.path .drop {
  width: 14px;
  margin-left: auto;
}

.path .refresh {
  width: 17px;
  height: 21px;
  border-left: 1px solid #d9d9d9;
}

.search {
  display: flex;
  align-items: center;
  flex: 1;
  height: 23px;
  margin-left: 12px;
  padding: 0 8px;
  border: 1px solid #d9d9d9;
}

.search input {
  flex: 1;
  min-width: 0;
}

.search input::placeholder {
  color: #6d6d6d;
}

.content {
  display: flex;
  height: 388px;
}

.tree {
  width: 140px;
  padding-top: 1px;
  overflow: hidden;
}

.tree a {
  display: flex;
  align-items: center;
  gap: 5px;
  height: 24px;
  padding: 0 0 2px 40px;
}

.tree .root {
  padding-left: 32px;
}

.tree .selected {
  background: #d9d9d9;
}

.v-scroll {
  display: flex;
  flex-direction: column;
  align-items: center;
  justify-content: space-between;
  width: 16px;
  padding: 6px 0;
  background: #f0f0f0;
}

.v-scroll .thumb {
  width: 15px;
  height: 110px;
  margin-bottom: 56px;
  background: #cdcdcd;
}

.files {
  flex: 1;
  display: flex;
  flex-direction: column;
  justify-content: space-between;
  padding-left: 4px;
}

table {
  width: 598px;
  margin-left: 14px;
  border-spacing: 0;
  table-layout: fixed;
  color: #6d6d6d;
}

th {
  height: 27px;
  padding: 0 0 0 6px;
  border-right: 1px solid #e5e5e5;
  font-weight: normal;
  text-align: left;
  color: #4c607a;
}

th.name {
  position: relative;
  width: 258px;
  padding-left: 3px;
}

th.date {
  width: 144px;
}

th.type {
  width: 120px;
}

.sort {
  position: absolute;
  top: 1px;
  left: 122px;
}

thead::after {
  content: "";
  display: block;
  height: 6px;
}

td {
  height: 21px;
  padding: 0 0 0 6px;
  line-height: 19px;
  vertical-align: top;
  white-space: nowrap;
}

td:first-child {
  padding-left: 4px;
  color: #000;
}

td svg {
  margin-right: 4px;
  vertical-align: -4px;
}

td:last-child {
  padding-right: 4px;
  text-align: right;
}

tr.selected td {
  background: #cce8ff;
  border: 1px solid #99d1ff;
  border-width: 1px 0;
}

tr.selected td:first-child {
  border-left-width: 1px;
  padding-left: 3px;
}

tr.selected td:last-child {
  border-right-width: 1px;
  padding-right: 3px;
}

.h-scroll {
  display: flex;
  align-items: center;
  gap: 6px;
  height: 16px;
  padding: 0 6px 0 4px;
  background: #f0f0f0;
}

.h-scroll .thumb {
  flex: 1;
  height: 16px;
  background: #cdcdcd;
}

.status-bar {
  display: flex;
  align-items: center;
  gap: 21px;
  height: 24px;
  padding: 0 5px 2px 14px;
  color: #1e395b;
}

.views {
  display: flex;
  margin-left: auto;
}

.views button {
  width: 22px;
  height: 22px;
}

.views .on {
  border: 1px solid #3a9bd9;
  background: #cce8ff;
}

/* taskbar */
.taskbar {
  display: flex;
  height: 40px;
  background: linear-gradient(90deg, #001a24, #01101d 50%, #020a1c);
  color: #fff;
}

.taskbar > button {
  width: 48px;
  margin-right: 1px;
}

.taskbar > .task-view {
  margin-right: 3px;
}

.taskbar > .current {
  background: #9b5a25;
  box-shadow: inset 0 -2px #f7630c;
}

.taskbar > .running {
  background: linear-gradient(#76b9ed, #76b9ed) bottom / 40px 2px no-repeat;
}

.task-search {
  display: flex;
  align-items: center;
  width: 287px;
  padding-left: 11px;
  border: 1px solid #b9bec0;
  background: #f0f0f0;
}

.task-search input {
  width: 160px;
  margin-left: 9px;
  font-size: 14px;
}

.task-search input::placeholder {
  color: #444;
}

.flowers {
  margin-left: auto;
}

.tray {
  display: flex;
  align-items: center;
  margin-left: auto;
  padding-right: 4px;
}

.tray button {
  width: 24px;
}

.clock {
  display: flex;
  flex-direction: column;
  width: 64px;
  padding-bottom: 1px;
  line-height: 18px;
  text-align: center;
}

.tray .notify {
  width: 49px;
  height: 40px;
  border-right: 1px solid #5a6270;
  padding-right: 9px;
}
```
